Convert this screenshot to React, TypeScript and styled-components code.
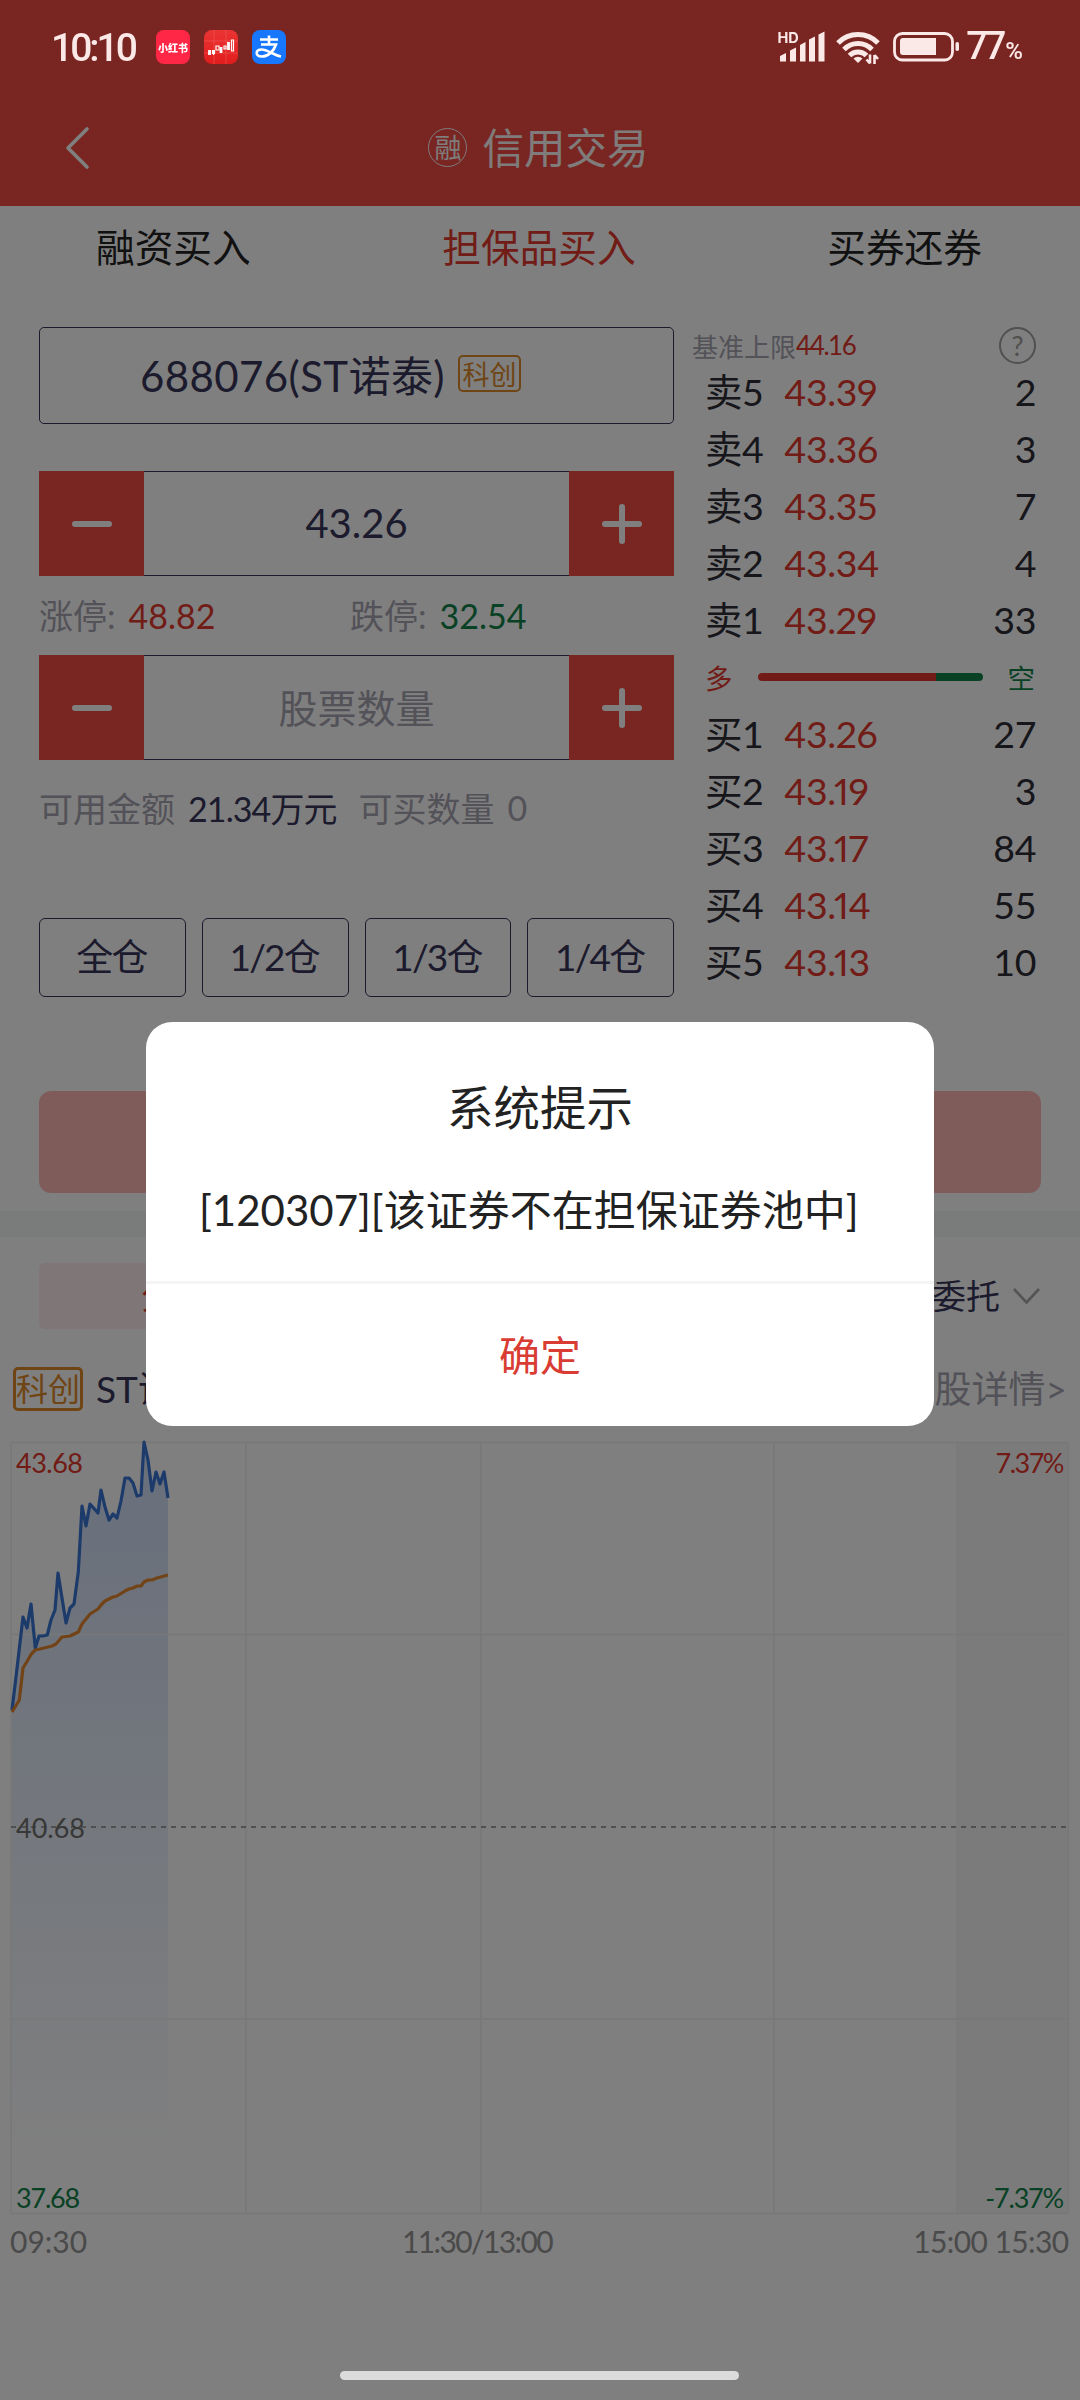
import React from 'react';
import styled, { createGlobalStyle } from 'styled-components';

const RED = '#f24c44';
const INK = '#38365a';
const MUTED = '#a6a4b0';
const UP = '#e2382d';
const DOWN = '#12834a';
const ORANGE = '#de8a2c';

const Global = createGlobalStyle`
  * { box-sizing: border-box; }
  body { margin: 0; background: #fff; overflow: hidden; }
  body, button { font-family: Lato, "Noto Sans CJK SC", sans-serif; }
  button { border: 0; padding: 0; background: none; }
`;

const Page = styled.main`
  width: 1080px;
  height: 2400px;
  display: flex;
  flex-direction: column;
  background: #fff;
`;

const Header = styled.header`
  height: 206px;
  background: ${RED};
  display: flex;
  flex-direction: column;
`;

const StatusBar = styled.div`
  position: relative;
  z-index: 20;
  height: 94px;
  padding: 0 57px 0 51px;
  display: flex;
  align-items: center;
  justify-content: space-between;
  color: #fbe9e8;
`;

const StatusGroup = styled.div`
  display: flex;
  align-items: center;
`;

const Clock = styled.span`
  font: 500 39px Roboto, sans-serif;
  letter-spacing: -3px;
  width: 105px;
  padding-top: 1px;
`;

const AppIcon = styled.span<{ $bg: string }>`
  width: 34px;
  height: 34px;
  margin-right: 14px;
  border-radius: 8px;
  background: ${p => p.$bg};
  color: #fff;
  display: flex;
  align-items: center;
  justify-content: center;
  font: 900 10px "Noto Sans CJK SC", sans-serif;
  overflow: hidden;
`;

const Percent = styled.span`
  display: flex;
  align-items: baseline;
  font: 500 38px/40px Roboto, sans-serif;
  letter-spacing: -3px;
  margin-left: 6px;
  padding-top: 3px;
  small { font-size: 24px; margin-left: 2px; letter-spacing: 0; }
`;

const NavBar = styled.div`
  flex: 1;
  display: grid;
  grid-template-columns: 160px 1fr 160px;
  align-items: center;
  padding-bottom: 5px;
`;

const BackIcon = styled.svg`
  margin-left: 62px;
`;

const NavTitle = styled.div`
  display: flex;
  align-items: center;
  justify-content: center;
  margin-left: -3px;
  color: #fff;
  font-size: 41.5px;
  line-height: 50px;
  opacity: 0.96;
`;

const MarginMark = styled.span`
  width: 39px;
  height: 39px;
  margin-right: 15px;
  border: 1.5px solid #fff;
  border-radius: 50%;
  font-size: 27px;
  display: flex;
  align-items: center;
  justify-content: center;
`;

const Tabs = styled.nav`
  height: 121px;
  padding: 16px 98px 0 96px;
  display: flex;
  justify-content: space-between;
  align-items: flex-start;
`;

const Tab = styled.span<{ $active?: boolean }>`
  font-size: 38.7px;
  line-height: 50px;
  color: ${p => (p.$active ? UP : '#222')};
`;

const Trade = styled.section`
  height: 690px;
  display: flex;
  padding: 0 39px;
`;

const Form = styled.div`
  width: 635px;
  display: flex;
  flex-direction: column;
`;

const StockBox = styled.div`
  height: 97px;
  border: 1.5px solid ${INK};
  border-radius: 5px;
  display: flex;
  align-items: center;
  padding: 0 0 4px 100px;
  color: ${INK};
  font-size: 42px;
`;

const Board = styled.span<{ $large?: boolean }>`
  display: flex;
  align-items: center;
  justify-content: center;
  width: ${p => (p.$large ? 70 : 63)}px;
  height: ${p => (p.$large ? 44 : 37)}px;
  border: ${p => (p.$large ? 3 : 2)}px solid ${ORANGE};
  border-radius: 5px;
  color: ${ORANGE};
  font-size: ${p => (p.$large ? 32 : 27)}px;
`;

const StockName = styled.span`
  margin-right: 13px;
  letter-spacing: 0.4px;
`;

const Stepper = styled.div<{ $top: number }>`
  margin-top: ${p => p.$top}px;
  height: 105px;
  display: grid;
  grid-template-columns: 105px 1fr 105px;
`;

const StepButton = styled.button`
  background: ${RED};
  display: flex;
  align-items: center;
  justify-content: center;
`;

const StepValue = styled.div<{ $empty?: boolean }>`
  border: solid ${INK};
  border-width: 1.5px 0;
  display: flex;
  align-items: center;
  justify-content: center;
  padding-bottom: ${p => (p.$empty ? 4 : 2)}px;
  color: ${p => (p.$empty ? MUTED : INK)};
  font-size: ${p => (p.$empty ? 39 : 40)}px;
`;

const InfoRow = styled.div<{ $height: number }>`
  height: ${p => p.$height}px;
  padding-bottom: 3px;
  display: flex;
  align-items: center;
  font-size: 34px;
  color: ${MUTED};
`;

const Limit = styled.div`
  width: 311px;
  display: flex;
  align-items: baseline;
`;

const Num = styled.span<{ $color: string; $gap?: number; $tight?: boolean }>`
  color: ${p => p.$color};
  margin-left: ${p => p.$gap ?? 13}px;
  letter-spacing: ${p => (p.$tight ? -0.9 : 0)}px;
`;

const Fractions = styled.div`
  margin-top: 60px;
  display: grid;
  grid-template-columns: repeat(4, 1fr);
  gap: 16px;
`;

const Fraction = styled.button`
  height: 79px;
  border: 1.5px solid ${INK};
  border-radius: 6px;
  color: ${INK};
  font-size: 37px;
  line-height: 50px;
  padding-bottom: 1px;
`;

const Ratio12 = styled.span`
  letter-spacing: -1.8px;
`;

const Book = styled.div`
  width: 367px;
  padding-left: 31px;
  display: flex;
  flex-direction: column;
`;

const BookHead = styled.div`
  height: 36px;
  margin-left: -13px;
  padding-right: 5px;
  display: flex;
  align-items: center;
  font-size: 26px;
  color: ${MUTED};
`;

const Baseline = styled.span`
  color: ${UP};
  letter-spacing: -1.4px;
`;

const Help = styled.span`
  width: 37px;
  height: 37px;
  margin-left: auto;
  border: 2px solid #a0a0a0;
  border-radius: 50%;
  display: flex;
  align-items: center;
  justify-content: center;
  font-size: 27px;
  color: #a0a0a0;
`;

const Level = styled.div`
  height: 57px;
  padding-right: 5px;
  display: grid;
  grid-template-columns: 79px 1fr auto;
  align-items: center;
  font-size: 37.5px;
  line-height: 50px;
  letter-spacing: -0.4px;
  color: #2c2c36;
`;

const LevelPrice = styled.span`
  color: ${UP};
  font-variant-numeric: proportional-nums;
`;

const Ratio = styled.div`
  height: 57px;
  padding-right: 6px;
  display: flex;
  align-items: center;
  justify-content: space-between;
  font-size: 27.5px;
`;

const RatioBar = styled.div`
  width: 225px;
  height: 8px;
  border-radius: 4px;
  background: linear-gradient(90deg, ${UP} 79%, ${DOWN} 79%);
`;

const Side = styled.span<{ $color: string }>`
  color: ${p => p.$color};
`;

const Submit = styled.button`
  margin: 74px 39px 18px;
  height: 102px;
  flex: none;
  border-radius: 12px;
  background: #ffb8b4;
`;

const Band = styled.div`
  height: 26px;
  background: #f4f9f7;
`;

const ViewTabs = styled.div`
  margin: 26px 39px 0;
  height: 66px;
  display: flex;
  align-items: center;
  justify-content: space-between;
  color: ${INK};
  font-size: 34px;
  line-height: 50px;
`;

const ViewPill = styled.span`
  width: 272px;
  height: 66px;
  border-radius: 5px;
  background: #feefee;
  color: ${UP};
  display: flex;
  align-items: center;
  justify-content: center;
`;

const OrderMenu = styled.span`
  display: flex;
  align-items: center;
  gap: 12px;
`;

const QuoteRow = styled.div`
  height: 91px;
  padding: 29px 13px 0 13px;
  display: flex;
  align-items: center;
  color: ${INK};
  font-size: 37px;
  line-height: 50px;
`;

const QuoteName = styled.span`
  margin-left: 13px;
`;

const Detail = styled.span`
  margin-left: auto;
  color: ${MUTED};
`;

const ChartSvg = styled.svg`
  display: block;
  flex: none;
  font-family: Lato, sans-serif;
`;

const Overlay = styled.div`
  position: fixed;
  inset: 0;
  z-index: 10;
  background: rgba(0, 0, 0, 0.5);
  display: flex;
  flex-direction: column;
  align-items: center;
  padding-top: 1022px;
`;

const Dialog = styled.div`
  width: 788px;
  height: 404px;
  border-radius: 26px;
  background: #fff;
  color: #222;
  display: flex;
  flex-direction: column;
  align-items: center;
`;

const DialogTitle = styled.h2`
  margin: 55px 0 0;
  font-size: 46.5px;
  line-height: 60px;
  font-weight: 400;
`;

const DialogText = styled.p`
  align-self: flex-start;
  margin: 45px 0 0 53px;
  font-size: 42px;
  line-height: 56px;
  white-space: nowrap;
`;

const DialogButton = styled.button`
  width: 100%;
  margin-top: auto;
  height: 145px;
  padding-bottom: 5px;
  border-top: 3px solid #f4f4f4;
  border-radius: 0 0 26px 26px;
  color: #d93c32;
  font-size: 41px;
`;

const HomeIndicator = styled.div`
  position: fixed;
  z-index: 20;
  left: 340px;
  top: 2371px;
  width: 399px;
  height: 9px;
  border-radius: 5px;
  background: #dcdcdc;
`;

const sells = [['卖5', '43.39', '2'], ['卖4', '43.36', '3'], ['卖3', '43.35', '7'], ['卖2', '43.34', '4'], ['卖1', '43.29', '33']];
const buys = [['买1', '43.26', '27'], ['买2', '43.19', '3'], ['买3', '43.17', '84'], ['买4', '43.14', '55'], ['买5', '43.13', '10']];

const price = '12,290 16,257 23,197 27,208 31,184 35.3,228 39,216 43,216 47.3,215 51,200 55,190 58,153 66,203 70,188 74,184 78.3,152 82,86 86,106 90,84 98,93 101,70 105,87 109,100 113,94 117,98 121,81 125,58 129,58 133,63 137,76 141,75 144,22 148,40 152,71 156,52 160,64 164,52 168,78';
const average = '12,292 19.3,280 23,248 27.3,241 31.3,234 35.3,230 40,229 52,226 56,224 62,217 70,216 78.3,212 82,204 90,194 98,189 101,185 105,181 113,177 117,176 125,171 129,169 133,168 137,166 141,166 144,162 148,160 152,160 157,158 168,155';

function Minus() {
  return (
    <svg width="40" height="40" viewBox="0 0 40 40" stroke="#fff" strokeWidth="6" strokeLinecap="round">
      <path d="M3 20H37" />
    </svg>
  );
}

function Plus() {
  return (
    <svg width="40" height="40" viewBox="0 0 40 40" stroke="#fff" strokeWidth="6" strokeLinecap="round">
      <path d="M3 20H37M20 3V37" />
    </svg>
  );
}

function Quotes({ rows }: { rows: string[][] }) {
  return (
    <>
      {rows.map(([name, value, qty]) => (
        <Level key={name}>
          <span>{name}</span>
          <LevelPrice>{value}</LevelPrice>
          <span>{qty}</span>
        </Level>
      ))}
    </>
  );
}

function Signals() {
  return (
    <svg width="184" height="40" viewBox="777 27 184 40" fill="#fbe9e8">
      <text x="778.5" y="43" fontFamily="Inter" fontWeight="700" fontSize="14.5">HD</text>
      <path d="M781 56l6-3v8.500h-6zM791 50.500l6-3v14h-6zM801 45l5.500-3v19.500h-5.500zM810 39.500l6-3v25h-6zM819.500 34.500l6-3v30h-6z" />
      <g fill="none" stroke="#fbe9e8" strokeWidth="5">
        <path d="M839 43a28 28 0 0 1 40 0" />
        <path d="M845 49.500a19.500 19.500 0 0 1 28 0" />
        <path d="M850.500 55.500a12 12 0 0 1 17 0" />
      </g>
      <path d="M854.500 58.500a6.500 6.500 0 0 1 9 0l-4.500 4.500z" />
      <path d="M871 54.500v9M875.500 64v-9M867.500 59.500l3.500 4M879 59l-3.500-4" stroke="#fbe9e8" strokeWidth="2.600" />
      <rect x="895.500" y="33.500" width="58" height="26.500" rx="8" fill="none" stroke="#fbe9e8" strokeWidth="2.800" />
      <path d="M904 38h33v17h-33a3 3 0 0 1-3-3v-11a3 3 0 0 1 3-3z" />
      <rect x="956.500" y="42" width="3.500" height="9" rx="1.700" />
    </svg>
  );
}

function Chart() {
  return (
    <ChartSvg width="1080" height="840" viewBox="0 0 1080 840">
      <defs>
        <linearGradient id="area" x1="0" y1="20" x2="0" y2="740" gradientUnits="userSpaceOnUse">
          <stop offset="0" stopColor="#4a82e0" stopOpacity="0.26" />
          <stop offset="1" stopColor="#4a82e0" stopOpacity="0" />
        </linearGradient>
      </defs>
      <rect x="956" y="22.500" width="112" height="771" fill="#f6f6f6" />
      <path d={`M12,793L${price.replace(/ /g, 'L')}L168,793Z`} fill="url(#area)" />
      <g fill="none" stroke="#f0f0f0" strokeWidth="1.500">
        <rect x="11" y="22.500" width="1057.500" height="771" />
        <path d="M11 214.500H1068M11 599H1068M246 22V793M481 22V793M774 22V793" />
      </g>
      <path d="M11 407H1068" stroke="#a0a0a0" strokeWidth="2" strokeDasharray="5 5" />
      <polyline points={price} fill="none" stroke="#3876d6" strokeWidth="3.200" strokeLinejoin="round" />
      <polyline points={average} fill="none" stroke="#e2862e" strokeWidth="3.200" strokeLinejoin="round" />
      <g fontSize="27">
        <text x="16" y="53" fill={UP} letterSpacing="-0.5">43.68</text>
        <text x="1063" y="53" fill={UP} textAnchor="end" letterSpacing="-1.5">7.37%</text>
        <text x="16" y="418" fill="#707070">40.68</text>
        <text x="16" y="788" fill={DOWN} letterSpacing="-1.200">37.68</text>
        <text x="1063" y="788" fill={DOWN} textAnchor="end" letterSpacing="-1.200">-7.37%</text>
      </g>
      <g fontSize="30" fill="#949494">
        <text x="10" y="833">09:30</text>
        <text x="477" y="833" textAnchor="middle" letterSpacing="-1.600">11:30/13:00</text>
        <text x="1068.500" y="833" textAnchor="end" letterSpacing="-0.600">15:00 15:30</text>
      </g>
    </ChartSvg>
  );
}

export default function App() {
  return (
    <Page>
      <Global />
      <Header>
        <StatusBar>
          <StatusGroup>
            <Clock>10:10</Clock>
            <AppIcon $bg="#ff2745">小红书</AppIcon>
            <AppIcon $bg="linear-gradient(#ea3433, #e11d1d)">
              <svg width="34" height="34" fill="none" stroke="#fff" strokeWidth="1.200">
                <path d="M10 0V34M22 0V34M0 11H34M0 23H34" stroke="#f0605c" strokeWidth="0.500" />
                <path d="M5.500 20v5M24.500 12v8M17 17v6" strokeWidth="2.800" />
                <path d="M9.500 21v4M12 16h3v4h-3zM8.500 20.500h2v3h-2zM20 16h2v3h-2zM27.500 10h2v11h-2z" />
              </svg>
            </AppIcon>
            <AppIcon $bg="#1777ff">
              <svg width="34" height="34" fill="none" stroke="#fff" strokeWidth="2.600">
                <path d="M8 9.500H26M17 5.500V15M9 14.500H24C22 21 16 26.500 10 26.500C3 26.500 3 19.500 9.500 19.500C16 19.500 21 25 29 26.500" />
              </svg>
            </AppIcon>
          </StatusGroup>
          <StatusGroup>
            <Signals />
            <Percent>77<small>%</small></Percent>
          </StatusGroup>
        </StatusBar>
        <NavBar>
          <BackIcon width="30" height="46" fill="none" stroke="#fff" strokeWidth="3.600" strokeLinecap="round" strokeLinejoin="round">
            <path d="M25 4L6 23L25 42" />
          </BackIcon>
          <NavTitle>
            <MarginMark>融</MarginMark>
            信用交易
          </NavTitle>
        </NavBar>
      </Header>
      <Tabs>
        <Tab>融资买入</Tab>
        <Tab $active>担保品买入</Tab>
        <Tab>买券还券</Tab>
      </Tabs>
      <Trade>
        <Form>
          <StockBox>
            <StockName>688076(ST诺泰)</StockName>
            <Board>科创</Board>
          </StockBox>
          <Stepper $top={47}>
            <StepButton><Minus /></StepButton>
            <StepValue>43.26</StepValue>
            <StepButton><Plus /></StepButton>
          </Stepper>
          <InfoRow $height={79}>
            <Limit>涨停:<Num $color={UP}>48.82</Num></Limit>
            <Limit>跌停:<Num $color={DOWN}>32.54</Num></Limit>
          </InfoRow>
          <Stepper $top={0}>
            <StepButton><Minus /></StepButton>
            <StepValue $empty>股票数量</StepValue>
            <StepButton><Plus /></StepButton>
          </Stepper>
          <InfoRow $height={98}>
            可用金额
            <Num $color={INK} $tight>21.34万元</Num>
            <Num $color={MUTED} $gap={22}>可买数量</Num>
            <Num $color={MUTED}>0</Num>
          </InfoRow>
          <Fractions>
            {['全', '1/2', '1/3', '1/4'].map(f => (
              <Fraction key={f}><Ratio12>{f}</Ratio12>仓</Fraction>
            ))}
          </Fractions>
        </Form>
        <Book>
          <BookHead>
            基准上限<Baseline>44.16</Baseline>
            <Help>?</Help>
          </BookHead>
          <Quotes rows={sells} />
          <Ratio>
            <Side $color={UP}>多</Side>
            <RatioBar />
            <Side $color={DOWN}>空</Side>
          </Ratio>
          <Quotes rows={buys} />
        </Book>
      </Trade>
      <Submit />
      <Band />
      <ViewTabs>
        <ViewPill>分时</ViewPill>
        <OrderMenu>
          委托
          <svg width="29" height="20" fill="none" stroke="#a8a8a8" strokeWidth="2.600">
            <path d="M2 3L14.500 16.500L27 3" />
          </svg>
        </OrderMenu>
      </ViewTabs>
      <QuoteRow>
        <Board $large>科创</Board>
        <QuoteName>ST诺泰</QuoteName>
        <Detail>个股详情&gt;</Detail>
      </QuoteRow>
      <Chart />
      <Overlay>
        <Dialog>
          <DialogTitle>系统提示</DialogTitle>
          <DialogText>[120307][该证券不在担保证券池中]</DialogText>
          <DialogButton>确定</DialogButton>
        </Dialog>
      </Overlay>
      <HomeIndicator />
    </Page>
  );
}
